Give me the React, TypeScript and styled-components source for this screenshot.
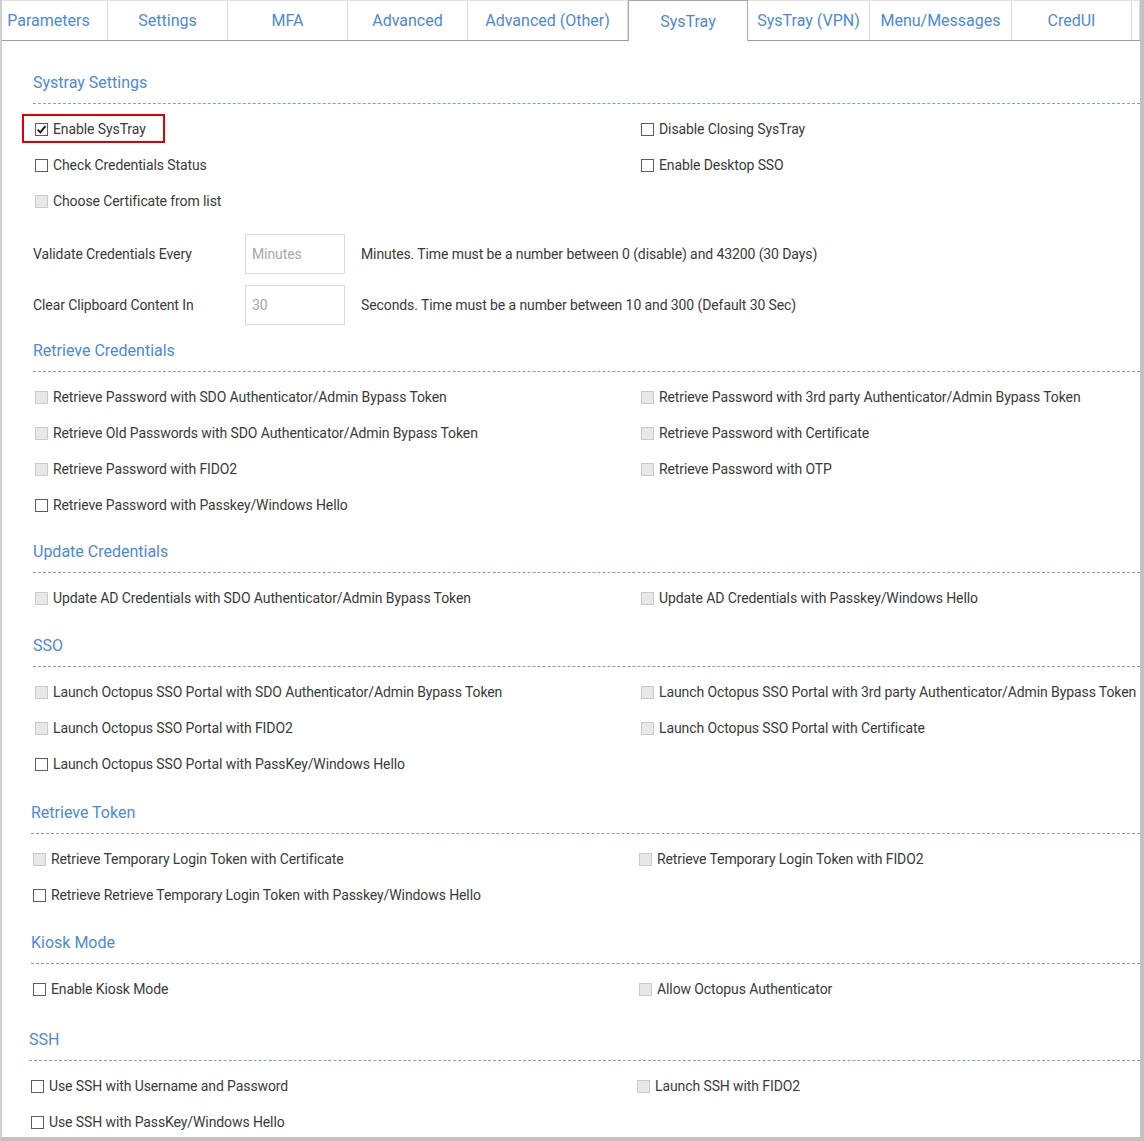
import React from 'react';
import styled, { createGlobalStyle } from 'styled-components';

// --- Global ---
const GlobalStyle = createGlobalStyle`
  html, body {
    margin: 0;
    padding: 0;
    background: #fff;
  }
  body {
    font-family: Roboto, "Noto Sans", Arial, sans-serif;
  }
`;

// --- Styled Components ---
const Frame = styled.div`
  width: 1144px;
  height: 1141px;
  box-sizing: border-box;
  border-right: 4px solid #c2c2c2;
  border-bottom: 4px solid #c2c2c2;
  border-left: 2px solid #cfcfcf;
  overflow: hidden;
  position: relative;
`;

const TabBar = styled.div`
  display: flex;
  height: 40px;
  border-bottom: 1px solid #9d9d9d;
  box-sizing: content-box;
`;

const Tab = styled.div<{ $w: number; $active?: boolean; $first?: boolean }>`
  width: ${({ $w }) => $w}px;
  flex: none;
  box-sizing: border-box;
  display: flex;
  align-items: center;
  justify-content: center;
  padding-right: ${({ $first }) => ($first ? '12px' : '0')};
  font-size: 16px;
  color: #4d89d9;
  background: #fff;
  border-top: 1px solid ${({ $active }) => ($active ? '#a9a9a9' : '#e2e2e2')};
  border-right: 1px solid ${({ $active }) => ($active ? '#a9a9a9' : '#dcdcdc')};
  border-left: ${({ $active }) => ($active ? '1px solid #a9a9a9' : 'none')};
  height: ${({ $active }) => ($active ? '41px' : '40px')};
  position: relative;
  z-index: ${({ $active }) => ($active ? 1 : 0)};
`;

const Content = styled.div`
  padding: 32px 0 0 31px;
`;

const Section = styled.section<{ $top?: number; $shift?: number }>`
  margin-top: ${({ $top }) => $top ?? 0}px;
  margin-left: ${({ $shift }) => $shift ?? 0}px;
`;

const Heading = styled.h3`
  margin: 0;
  height: 20px;
  line-height: 20px;
  padding-bottom: 10px;
  font-size: 16px;
  font-weight: 400;
  color: #4d89d9;
  border-bottom: 1px dashed #7d9fcf;
`;

const Grid = styled.div`
  display: grid;
  grid-template-columns: 606px 1fr;
  padding-top: 7px;
  padding-bottom: 1px;
`;

const Row = styled.div`
  height: 36px;
  display: flex;
  align-items: center;
  padding-left: 2px;
`;

const Label = styled.label<{ $highlight?: boolean }>`
  display: inline-flex;
  align-items: center;
  font-size: 14px;
  letter-spacing: -0.1px;
  color: #3a3a3a;
  position: relative;
  white-space: nowrap;

  ${({ $highlight }) =>
    $highlight &&
    `
    &::after {
      content: '';
      position: absolute;
      left: -13px;
      right: -19px;
      top: -7px;
      bottom: -6px;
      border: 2px solid #e00000;
    }
  `}
`;

const Box = styled.span<{ $disabled?: boolean }>`
  width: 13px;
  height: 13px;
  box-sizing: border-box;
  flex: none;
  margin-right: 5px;
  border: 1px solid ${({ $disabled }) => ($disabled ? '#cacaca' : '#5e5e5e')};
  background: ${({ $disabled }) => ($disabled ? '#e8e8e8' : '#fff')};
  display: flex;
  align-items: center;
  justify-content: center;
`;

const Fields = styled.div`
  margin-top: 14px;
  display: flex;
  flex-direction: column;
  gap: 11px;
`;

const FieldRow = styled.div`
  display: flex;
  align-items: center;
  height: 40px;
  font-size: 14px;
  letter-spacing: -0.1px;
  color: #3a3a3a;
`;

const FieldLabel = styled.span`
  width: 212px;
  flex: none;
`;

const TextBox = styled.div`
  width: 100px;
  height: 40px;
  box-sizing: border-box;
  border: 1px solid #dadada;
  display: flex;
  align-items: center;
  padding-left: 6px;
  color: #a8a8a8;
  margin-right: 16px;
`;

// --- Data ---
interface Item {
  text: string;
  disabled?: boolean;
  checked?: boolean;
  highlight?: boolean;
}

const tabs = [
  { name: 'Parameters', w: 106 },
  { name: 'Settings', w: 120 },
  { name: 'MFA', w: 120 },
  { name: 'Advanced', w: 120 },
  { name: 'Advanced (Other)', w: 160 },
  { name: 'SysTray', w: 120, active: true },
  { name: 'SysTray (VPN)', w: 122 },
  { name: 'Menu/Messages', w: 142 },
  { name: 'CredUI', w: 120 },
  { name: '', w: 8 },
];

const Check = ({ item }: { item: Item }) => (
  <Label $highlight={item.highlight}>
    <Box $disabled={item.disabled}>
      {item.checked && (
        <svg width="11" height="11" viewBox="0 0 11 11">
          <path d="M1.6 5.6 L4.3 8.3 L9.4 2.2" fill="none" stroke="#111" strokeWidth="1.8" />
        </svg>
      )}
    </Box>
    {item.text}
  </Label>
);

const Rows = ({ items }: { items: (Item | null)[] }) => (
  <Grid>
    {items.map((item, i) => (
      <Row key={i}>{item && <Check item={item} />}</Row>
    ))}
  </Grid>
);

// --- Component ---
export default function App() {
  return (
    <>
      <GlobalStyle />
      <Frame>
        <TabBar>
          {tabs.map((t, i) => (
            <Tab key={i} $w={t.w} $active={t.active} $first={i === 0}>
              {t.name}
            </Tab>
          ))}
        </TabBar>
        <Content>
          <Section>
            <Heading>Systray Settings</Heading>
            <Rows
              items={[
                { text: 'Enable SysTray', checked: true, highlight: true },
                { text: 'Disable Closing SysTray' },
                { text: 'Check Credentials Status' },
                { text: 'Enable Desktop SSO' },
                { text: 'Choose Certificate from list', disabled: true },
                null,
              ]}
            />
            <Fields>
              <FieldRow>
                <FieldLabel>Validate Credentials Every</FieldLabel>
                <TextBox>Minutes</TextBox>
                Minutes. Time must be a number between 0 (disable) and 43200 (30 Days)
              </FieldRow>
              <FieldRow>
                <FieldLabel>Clear Clipboard Content In</FieldLabel>
                <TextBox>30</TextBox>
                Seconds. Time must be a number between 10 and 300 (Default 30 Sec)
              </FieldRow>
            </Fields>
          </Section>

          <Section $top={16}>
            <Heading>Retrieve Credentials</Heading>
            <Rows
              items={[
                { text: 'Retrieve Password with SDO Authenticator/Admin Bypass Token', disabled: true },
                { text: 'Retrieve Password with 3rd party Authenticator/Admin Bypass Token', disabled: true },
                { text: 'Retrieve Old Passwords with SDO Authenticator/Admin Bypass Token', disabled: true },
                { text: 'Retrieve Password with Certificate', disabled: true },
                { text: 'Retrieve Password with FIDO2', disabled: true },
                { text: 'Retrieve Password with OTP', disabled: true },
                { text: 'Retrieve Password with Passkey/Windows Hello' },
                null,
              ]}
            />
          </Section>

          <Section $top={18}>
            <Heading>Update Credentials</Heading>
            <Rows
              items={[
                { text: 'Update AD Credentials with SDO Authenticator/Admin Bypass Token', disabled: true },
                { text: 'Update AD Credentials with Passkey/Windows Hello', disabled: true },
              ]}
            />
          </Section>

          <Section $top={19}>
            <Heading>SSO</Heading>
            <Rows
              items={[
                { text: 'Launch Octopus SSO Portal with SDO Authenticator/Admin Bypass Token', disabled: true },
                { text: 'Launch Octopus SSO Portal with 3rd party Authenticator/Admin Bypass Token', disabled: true },
                { text: 'Launch Octopus SSO Portal with FIDO2', disabled: true },
                { text: 'Launch Octopus SSO Portal with Certificate', disabled: true },
                { text: 'Launch Octopus SSO Portal with PassKey/Windows Hello' },
                null,
              ]}
            />
          </Section>

          <Section $top={20} $shift={-2}>
            <Heading>Retrieve Token</Heading>
            <Rows
              items={[
                { text: 'Retrieve Temporary Login Token with Certificate', disabled: true },
                { text: 'Retrieve Temporary Login Token with FIDO2', disabled: true },
                { text: 'Retrieve Retrieve Temporary Login Token with Passkey/Windows Hello' },
                null,
              ]}
            />
          </Section>

          <Section $top={19} $shift={-2}>
            <Heading>Kiosk Mode</Heading>
            <Rows
              items={[
                { text: 'Enable Kiosk Mode' },
                { text: 'Allow Octopus Authenticator', disabled: true },
              ]}
            />
          </Section>

          <Section $top={22} $shift={-4}>
            <Heading>SSH</Heading>
            <Rows
              items={[
                { text: 'Use SSH with Username and Password' },
                { text: 'Launch SSH with FIDO2', disabled: true },
                { text: 'Use SSH with PassKey/Windows Hello' },
                null,
              ]}
            />
          </Section>
        </Content>
      </Frame>
    </>
  );
}
